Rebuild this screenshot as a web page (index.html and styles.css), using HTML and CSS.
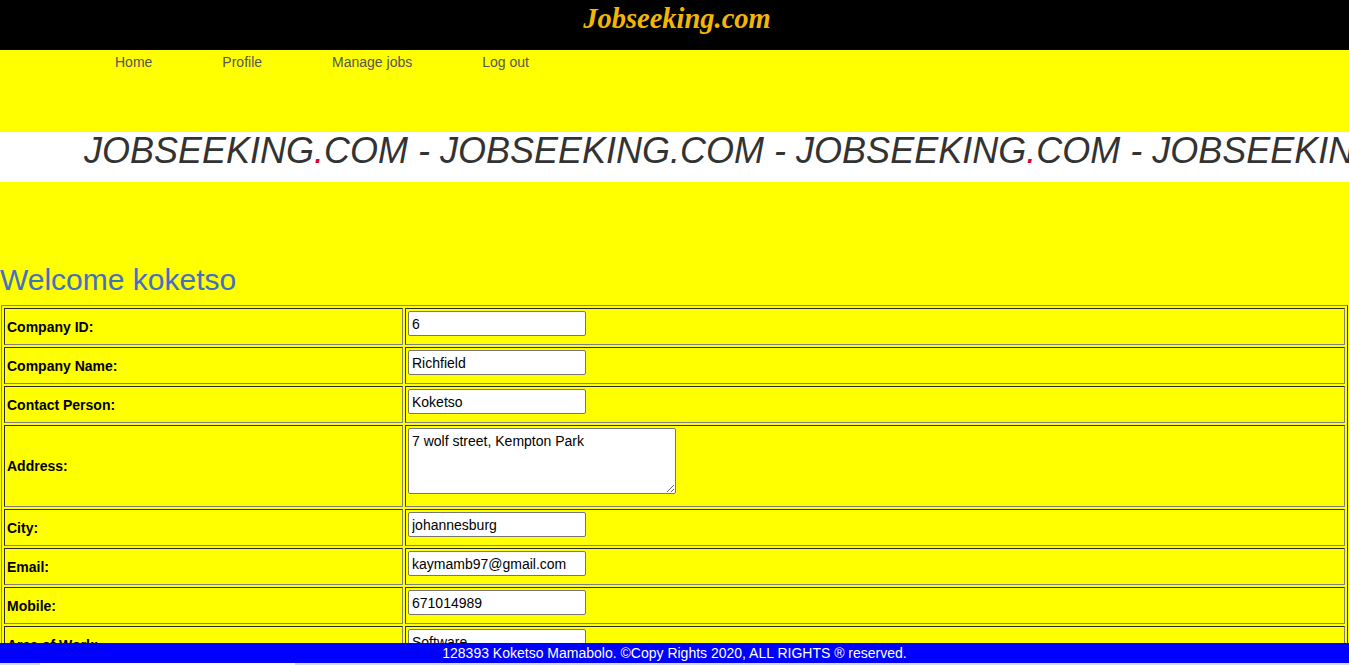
FILE: index.html
```html
<!DOCTYPE html>
<html lang="en">
<head>
<meta charset="utf-8">
<title>Jobseeking.com</title>
<link rel="stylesheet" href="styles.css">
</head>
<body>
<header class="site-header">
  <h1 class="brand">Jobseeking.com</h1>
</header>
<nav class="main-nav">
  <ul class="nav-list">
    <li><a href="#">Home</a></li>
    <li><a href="#">Profile</a></li>
    <li><a href="#">Manage jobs</a></li>
    <li><a href="#">Log out</a></li>
  </ul>
</nav>
<div class="marquee">
  <span class="marquee-text">JOBSEEKING<span class="dot">.</span>COM - JOBSEEKING.COM - JOBSEEKING<span class="dot">.</span>COM - JOBSEEKING.COM - </span>
</div>
<main class="content">
  <h2 class="welcome">Welcome koketso</h2>
  <form class="profile-form">
    <table class="profile-table">
      <colgroup><col class="col-label"><col class="col-field"></colgroup>
      <tr><td class="label">Company ID:</td><td class="field"><input type="text" value="6"></td></tr>
      <tr><td class="label">Company Name:</td><td class="field"><input type="text" value="Richfield"></td></tr>
      <tr><td class="label">Contact Person:</td><td class="field"><input type="text" value="Koketso"></td></tr>
      <tr class="tall"><td class="label">Address:</td><td class="field"><textarea>7 wolf street, Kempton Park</textarea></td></tr>
      <tr><td class="label">City:</td><td class="field"><input type="text" value="johannesburg"></td></tr>
      <tr><td class="label">Email:</td><td class="field"><input type="text" value="kaymamb97@gmail.com"></td></tr>
      <tr><td class="label">Mobile:</td><td class="field"><input type="text" value="671014989"></td></tr>
      <tr><td class="label">Area of Work:</td><td class="field"><input type="text" value="Software"></td></tr>
    </table>
  </form>
</main>
<footer class="site-footer">
  <div class="footer-bar">128393 Koketso Mamabolo. ©Copy Rights 2020, ALL RIGHTS ® reserved.</div>
  <div class="footer-strip"><span class="strip-thumb"></span></div>
</footer>
</body>
</html>
```
FILE: styles.css
```css
html, body {
  margin: 0;
  padding: 0;
}
body {
  background: #ffff00;
  font-family: "Liberation Sans", Arial, sans-serif;
  overflow: hidden;
}
.site-header {
  background: #000;
  height: 50px;
  display: flex;
  justify-content: center;
  align-items: flex-start;
}
.brand {
  margin: 3px 0 0 5px;
  font-family: "Liberation Serif", "Times New Roman", serif;
  font-style: italic;
  font-weight: bold;
  font-size: 28.5px;
  line-height: 32px;
  color: #f2b705;
}
.main-nav {
  height: 82px;
}
.nav-list {
  list-style: none;
  margin: 0;
  padding: 3px 0 0 80px;
  display: flex;
}
.nav-list li {
  padding: 0 35px;
}
.nav-list a {
  color: #555;
  text-decoration: none;
  font-size: 14px;
  line-height: 16px;
}
.marquee {
  background: #fff;
  height: 50px;
  overflow: hidden;
  white-space: nowrap;
  padding-left: 84px;
}
.marquee-text {
  font-size: 36px;
  font-style: italic;
  color: #333;
  line-height: 38px;
}
.dot {
  color: #e0002a;
}
.content {
  padding-top: 81px;
}
.welcome {
  margin: 0 0 8px 0;
  font-size: 30px;
  font-weight: normal;
  line-height: 34px;
  color: #4470c4;
}
.profile-form {
  margin: 0;
}
.profile-table {
  margin-left: 1px;
  width: 1347px;
  table-layout: fixed;
  border: 1px outset #808080;
  border-spacing: 2px;
}
.col-label {
  width: 399px;
}
.profile-table td {
  box-sizing: border-box;
  height: 37px;
  border: 1px inset #808080;
  padding: 2px;
  font-size: 14px;
}
.profile-table tr.tall td {
  height: 82px;
}
.label {
  font-weight: bold;
  vertical-align: middle;
}
.field {
  vertical-align: top;
}
.field input {
  box-sizing: border-box;
  width: 178px;
  height: 25px;
  margin: 0;
  padding: 1px 3px;
  border: 1px solid #767676;
  border-radius: 2px;
  font-family: "Liberation Sans", Arial, sans-serif;
  font-size: 14px;
  color: #000;
  background: #fff;
}
.field textarea {
  box-sizing: border-box;
  display: block;
  width: 268px;
  height: 66px;
  margin: 0;
  padding: 4px 3px 2px 3px;
  border: 1px solid #767676;
  border-radius: 2px;
  font-family: "Liberation Sans", Arial, sans-serif;
  font-size: 14px;
  color: #000;
  background: #fff;
}
.site-footer {
  position: fixed;
  left: 0;
  right: 0;
  bottom: 0;
}
.footer-bar {
  background: #0000ff;
  color: #fff;
  text-align: center;
  font-size: 14px;
  line-height: 20px;
  height: 20px;
}
.footer-strip {
  height: 2px;
  background: #d8d8e0;
  display: flex;
  padding-left: 40px;
}
.strip-thumb {
  width: 255px;
  background: #fff;
}
```
